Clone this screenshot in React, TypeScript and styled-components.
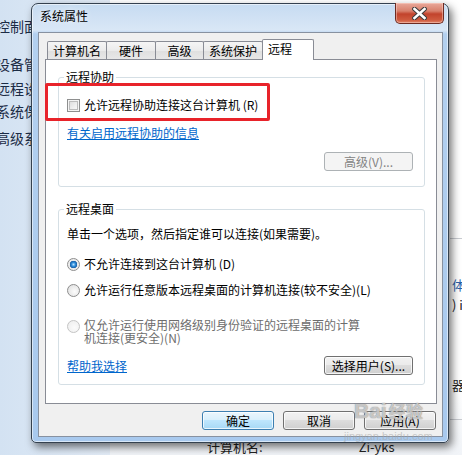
import React from 'react'
import styled, { createGlobalStyle } from 'styled-components'

const GlobalStyle = createGlobalStyle`
  html, body {
    margin: 0;
    padding: 0;
  }
  body {
    width: 462px;
    height: 455px;
    overflow: hidden;
    font-family: "Noto Sans CJK SC", "Liberation Sans", sans-serif;
    font-size: 12px;
    color: #000;
  }
`

const FONT = `"Noto Sans CJK SC", "Liberation Sans", sans-serif`

/* ---------- backdrop: the control panel behind the dialog ---------- */

const Desktop = styled.div`
  position: relative;
  width: 462px;
  height: 455px;
  overflow: hidden;
  display: flex;
  background: #fff;
`

const Sidebar = styled.div`
  width: 110px;
  flex: none;
  display: flex;
  flex-direction: column;
  padding-top: 17px;
  background: linear-gradient(90deg, #d3e2f2 0%, #e3ecf7 100%);
`

const SideLink = styled.div<{ $gap: number }>`
  margin-top: ${({ $gap }) => $gap}px;
  margin-left: -4px;
  font-size: 14px;
  line-height: 18px;
  color: #1b2b45;
  white-space: nowrap;
`

const MainPane = styled.div`
  flex: 1;
  display: flex;
  flex-direction: column;
  background: linear-gradient(180deg, #ffffff 0%, #ffffff 85%, #f1f4f8 100%);
`

const Rule = styled.div<{ $gap: number }>`
  margin-top: ${({ $gap }) => $gap}px;
  margin-left: 340px;
  height: 1px;
  background: #c9ccd1;
`

const Peek = styled.div<{ $gap: number; $blue?: boolean }>`
  margin-top: ${({ $gap }) => $gap}px;
  padding-left: 342px;
  font-size: 13px;
  line-height: 16px;
  white-space: nowrap;
  color: ${({ $blue }) => ($blue ? '#2a5fa8' : '#222')};
`

const InfoRow = styled.div`
  margin-top: 20px;
  display: flex;
  gap: 96px;
  padding-left: 97px;
  font-size: 13px;
  line-height: 16px;
  color: #222;
`

/* ---------- dialog window ---------- */

const Window = styled.div`
  position: absolute;
  left: 31px;
  top: 3px;
  width: 418px;
  height: 440px;
  box-sizing: border-box;
  display: flex;
  flex-direction: column;
  padding: 0 5px 5px 6px;
  border: 1px solid #34414f;
  border-radius: 7px 7px 5px 5px;
  background: linear-gradient(180deg, #c6dbf1 0px, #d9e7f6 26px, #b3d0ef 30px, #a8c9ee 100%);
  box-shadow: inset 0 0 0 1px rgba(255, 255, 255, 0.55), 3px 4px 9px rgba(0, 0, 0, 0.55);
`

const TitleBar = styled.div`
  height: 28px;
  flex: none;
  display: flex;
  align-items: flex-start;
  padding: 5px 0 0 2px;
  box-sizing: border-box;
`

const Title = styled.span`
  font-size: 12px;
  line-height: 14px;
  color: #000;
  text-shadow: 0 0 6px rgba(255, 255, 255, 0.9);
`

const CloseButton = styled.div`
  position: absolute;
  top: -1px;
  right: 4px;
  width: 47px;
  height: 20px;
  display: flex;
  align-items: center;
  justify-content: center;
  border: 1px solid #6d2b22;
  border-top: none;
  border-radius: 0 0 5px 5px;
  background: linear-gradient(180deg, #e9a99b 0%, #d8806c 40%, #c2432c 55%, #cf5b3f 85%, #e2866a 100%);
  box-shadow: inset 0 0 0 1px rgba(255, 220, 210, 0.45);
`

const Client = styled.div`
  flex: 1;
  display: flex;
  flex-direction: column;
  padding: 6px 5px 6px 6px;
  border: 1px solid #8791a0;
  background: #f0f0f0;
`

const TabStrip = styled.div`
  height: 20px;
  flex: none;
  display: flex;
  align-items: flex-end;
  padding-left: 2px;
`

const Tab = styled.div<{ $w: number; $active?: boolean }>`
  position: relative;
  width: ${({ $w }) => $w}px;
  height: ${({ $active }) => ($active ? 21 : 18)}px;
  margin-left: -1px;
  margin-bottom: ${({ $active }) => ($active ? -1 : 0)}px;
  z-index: ${({ $active }) => ($active ? 2 : 1)};
  box-sizing: border-box;
  display: flex;
  align-items: center;
  justify-content: ${({ $active }) => ($active ? 'flex-start' : 'center')};
  padding-left: ${({ $active }) => ($active ? 5 : 0)}px;
  padding-bottom: ${({ $active }) => ($active ? 3 : 0)}px;
  border: 1px solid #898c95;
  border-bottom: none;
  border-radius: 2px 2px 0 0;
  background: ${({ $active }) =>
    $active ? '#fff' : 'linear-gradient(180deg, #f5f5f5 0%, #ebebeb 50%, #dfdfdf 51%, #e7e7e7 100%)'};
  font-size: 12px;
  line-height: 14px;
  white-space: nowrap;
  &:first-child {
    margin-left: 0;
  }
`

const Panel = styled.div`
  height: 345px;
  flex: none;
  box-sizing: border-box;
  display: flex;
  flex-direction: column;
  padding: 10px 11px 0 12px;
  border: 1px solid #898c95;
  background: #fff;
`

const Group = styled.fieldset<{ $h: number; $gap?: number }>`
  height: ${({ $h }) => $h}px;
  margin: ${({ $gap }) => $gap || 0}px 0 0 0;
  padding: 0 0 0 8px;
  box-sizing: border-box;
  display: flex;
  flex-direction: column;
  align-items: flex-start;
  border: 1px solid #d5dfe5;
  border-radius: 3px;
  min-width: 0;
`

const Legend = styled.legend`
  padding: 0 2px;
  margin-left: -3px;
  font-size: 12px;
  line-height: 14px;
  color: #000;
`

const OptionRow = styled.div<{ $gap: number; $disabled?: boolean }>`
  position: relative;
  margin-top: ${({ $gap }) => $gap}px;
  display: flex;
  align-items: flex-start;
  gap: 4px;
  font-size: 12px;
  line-height: 16px;
  white-space: nowrap;
  color: ${({ $disabled }) => ($disabled ? '#6d6d6d' : '#000')};
`

const OptionText = styled.span<{ $wrap?: boolean }>`
  line-height: ${({ $wrap }) => ($wrap ? 13 : 16)}px;
  white-space: ${({ $wrap }) => ($wrap ? 'normal' : 'nowrap')};
  width: ${({ $wrap }) => ($wrap ? '276px' : 'auto')};
`

const Highlight = styled.div`
  position: absolute;
  left: -22px;
  top: -14px;
  width: 225px;
  height: 38px;
  box-sizing: border-box;
  border: 3px solid #e8232a;
  border-radius: 2px;
  pointer-events: none;
`

const CheckBox = styled.span`
  flex: none;
  width: 13px;
  height: 13px;
  margin-top: 2px;
  box-sizing: border-box;
  border: 1px solid #8e8f8f;
  background: linear-gradient(135deg, #d6d6d6 0%, #f0f0f0 60%, #fcfcfc 100%);
  box-shadow: inset 0 0 0 1px #f4f4f4, inset 0 0 0 2px #bcbcbc;
`

const Radio = styled.span<{ $checked?: boolean; $disabled?: boolean }>`
  flex: none;
  position: relative;
  width: 13px;
  height: 13px;
  margin-top: 2px;
  box-sizing: border-box;
  border-radius: 50%;
  border: 1px solid ${({ $disabled }) => ($disabled ? '#c4c4c4' : '#8d8d8d')};
  background: ${({ $checked, $disabled }) =>
    $checked
      ? 'radial-gradient(circle at 50% 50%, #b9e0ff 0px, #2b8bd8 2px, #1b5fa6 3.5px, #e9e9e9 4px, #f8f8f8 100%)'
      : $disabled
      ? 'radial-gradient(circle at 60% 60%, #fbfbfb 0%, #ececec 100%)'
      : 'radial-gradient(circle at 60% 60%, #fcfcfc 0%, #dcdcdc 100%)'};
`

const Link = styled.a<{ $gap?: number }>`
  display: block;
  margin-top: ${({ $gap }) => $gap || 0}px;
  font-size: 12px;
  line-height: 16px;
  color: #0066cc;
  text-decoration: underline;
  cursor: pointer;
`

const Desc = styled.div<{ $gap: number }>`
  margin-top: ${({ $gap }) => $gap}px;
  font-size: 12px;
  line-height: 16px;
  white-space: nowrap;
`

const ButtonRow = styled.div<{ $gap: number }>`
  align-self: stretch;
  margin-top: ${({ $gap }) => $gap}px;
  display: flex;
  align-items: center;
  justify-content: space-between;
  padding-right: 11px;
`

const Button = styled.button<{ $w: number; $primary?: boolean }>`
  width: ${({ $w }) => $w}px;
  height: 19px;
  padding: 0;
  box-sizing: border-box;
  font-family: ${FONT};
  font-size: 12px;
  line-height: 15px;
  color: #000;
  border-radius: 3px;
  border: 1px solid ${({ $primary }) => ($primary ? '#3c7fb1' : '#707070')};
  background: ${({ $primary }) =>
    $primary
      ? 'linear-gradient(180deg, #eaf6fd 0%, #d9f0fc 45%, #bee6fd 50%, #a7d9f5 100%)'
      : 'linear-gradient(180deg, #f2f2f2 0%, #ebebeb 45%, #dddddd 50%, #cfcfcf 100%)'};
  box-shadow: inset 0 0 0 1px rgba(255, 255, 255, 0.75);
  &:disabled {
    color: #838383;
    border-color: #adb2b5;
    background: #f4f4f4;
    box-shadow: none;
  }
`

const CornerButton = styled(Button)`
  align-self: flex-end;
  margin-top: 11px;
  margin-right: 11px;
`

const Footer = styled.div`
  margin-top: 7px;
  display: flex;
  justify-content: flex-end;
  gap: 9px;
  padding-right: 1px;
`

/* ---------- watermark overlay ---------- */

const Watermark = styled.div`
  position: absolute;
  left: 344px;
  top: 398px;
  display: flex;
  flex-direction: column;
  align-items: center;
  pointer-events: none;
  font-family: "Liberation Sans", sans-serif;
`

const MarkLogo = styled.div`
  display: flex;
  align-items: center;
  font-size: 21px;
  font-weight: bold;
  line-height: 26px;
  color: rgba(255, 255, 255, 0.55);
  text-shadow: 0 0 1px rgba(120, 120, 120, 0.7), 0 0 1px rgba(120, 120, 120, 0.7);
`

const MarkCn = styled.span`
  margin-left: 2px;
  font-family: ${FONT};
  font-size: 17px;
`

const MarkUrl = styled.div`
  margin-top: 6px;
  font-size: 11px;
  line-height: 12px;
  color: rgba(170, 170, 170, 0.6);
`

const CloseGlyph = () => (
  <svg width="15" height="13" viewBox="0 0 15 13">
    <path d="M2.5 2 L12.5 11 M12.5 2 L2.5 11" stroke="#3a3a3a" strokeWidth="4.6" strokeLinecap="square" />
    <path d="M2.5 2 L12.5 11 M12.5 2 L2.5 11" stroke="#fff" strokeWidth="2.6" strokeLinecap="square" />
  </svg>
)

const tabs = [
  { label: '计算机名', w: 60 },
  { label: '硬件', w: 50 },
  { label: '高级', w: 49 },
  { label: '系统保护', w: 60 },
]

const sideLinks = [
  { label: '控制面板主页', gap: 0 },
  { label: '设备管理器', gap: 20 },
  { label: '远程设置', gap: 6 },
  { label: '系统保护', gap: 5 },
  { label: '高级系统设置', gap: 9 },
]

const App: React.FC = () => (
  <>
    <GlobalStyle />
    <Desktop>
      <Sidebar>
        {sideLinks.map((s) => (
          <SideLink key={s.label} $gap={s.gap}>
            {s.label}
          </SideLink>
        ))}
      </Sidebar>
      <MainPane>
        <Rule $gap={238} />
        <Peek $gap={38} $blue>
          体验
        </Peek>
        <Peek $gap={4}>) i</Peek>
        <Peek $gap={64}>器</Peek>
        <Rule $gap={26} />
        <InfoRow>
          <span>计算机名:</span>
          <span>Zi-yks</span>
        </InfoRow>
      </MainPane>

      <Window>
        <TitleBar>
          <Title>系统属性</Title>
        </TitleBar>
        <CloseButton>
          <CloseGlyph />
        </CloseButton>
        <Client>
          <TabStrip>
            {tabs.map((t) => (
              <Tab key={t.label} $w={t.w}>
                {t.label}
              </Tab>
            ))}
            <Tab $w={52} $active>
              远程
            </Tab>
          </TabStrip>
          <Panel>
            <Group $h={117}>
              <Legend>远程协助</Legend>
              <OptionRow $gap={13}>
                <Highlight />
                <CheckBox />
                <OptionText>允许远程协助连接这台计算机 (R)</OptionText>
              </OptionRow>
              <Link $gap={12}>有关启用远程协助的信息</Link>
              <CornerButton $w={89} disabled>
                高级(V)...
              </CornerButton>
            </Group>
            <Group $h={183} $gap={15}>
              <Legend>远程桌面</Legend>
              <Desc $gap={10}>单击一个选项，然后指定谁可以连接(如果需要)。</Desc>
              <OptionRow $gap={14}>
                <Radio $checked />
                <OptionText>不允许连接到这台计算机 (D)</OptionText>
              </OptionRow>
              <OptionRow $gap={10}>
                <Radio />
                <OptionText>允许运行任意版本远程桌面的计算机连接(较不安全)(L)</OptionText>
              </OptionRow>
              <OptionRow $gap={20} $disabled>
                <Radio $disabled />
                <OptionText $wrap>仅允许运行使用网络级别身份验证的远程桌面的计算机连接(更安全)(N)</OptionText>
              </OptionRow>
              <ButtonRow $gap={12}>
                <Link>帮助我选择</Link>
                <Button $w={89}>选择用户(S)...</Button>
              </ButtonRow>
            </Group>
          </Panel>
          <Footer>
            <Button $w={72} $primary>
              确定
            </Button>
            <Button $w={72}>取消</Button>
            <Button $w={72}>应用(A)</Button>
          </Footer>
        </Client>
      </Window>

      <Watermark>
        <MarkLogo>
          Bai<MarkCn>经验</MarkCn>
        </MarkLogo>
        <MarkUrl>jingyan.baidu.com</MarkUrl>
      </Watermark>
    </Desktop>
  </>
)

export default App
